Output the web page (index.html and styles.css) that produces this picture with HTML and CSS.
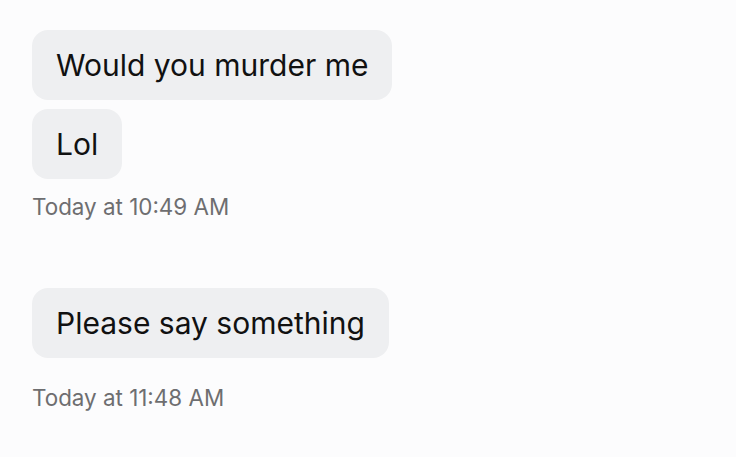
FILE: index.html
```html
<!DOCTYPE html>
<html>
<head>
<meta charset="utf-8">
<link rel="stylesheet" href="styles.css">
</head>
<body>
<div class="thread">
  <div class="group">
    <div class="bubble">Would you murder me</div>
    <div class="bubble">Lol</div>
    <div class="time">Today at 10:49 AM</div>
  </div>
  <div class="group">
    <div class="bubble">Please say something</div>
    <div class="time time-late">Today at 11:48 AM</div>
  </div>
</div>
</body>
</html>
```
FILE: styles.css
```css
html, body {
  margin: 0;
  background: #fcfcfd;
}
body {
  font-family: Inter, "Noto Sans", sans-serif;
  width: 736px;
  height: 457px;
  overflow: hidden;
}
.thread {
  display: flex;
  flex-direction: column;
  gap: 67px;
  padding: 30px 0 0 32px;
}
.group {
  display: flex;
  flex-direction: column;
  align-items: flex-start;
  gap: 9px;
}
.bubble {
  background: #eeeff1;
  border-radius: 16px;
  padding: 0 24px;
  height: 70px;
  line-height: 70px;
  font-size: 30px;
  color: #111;
}
.time {
  font-size: 22.4px;
  color: #6e6e70;
  line-height: 28px;
  margin-top: 5px;
}
.time-late {
  margin-top: 17px;
}
```
